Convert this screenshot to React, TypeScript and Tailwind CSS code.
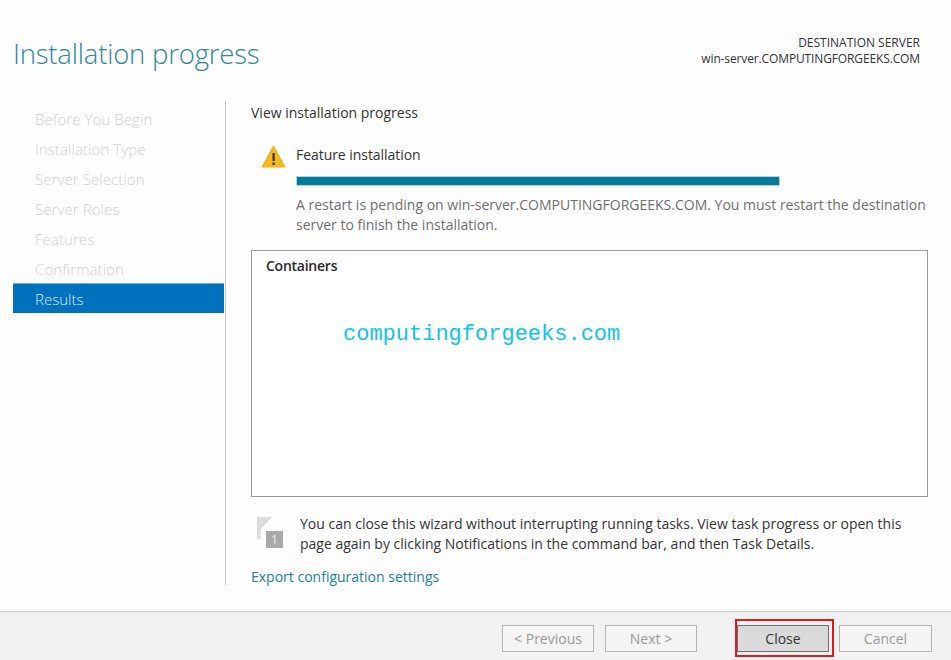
import React from "react";

const steps = ["Before You Begin", "Installation Type", "Server Selection", "Server Roles", "Features", "Confirmation"];
const font = { fontFamily: '"Open Sans", "Noto Sans", sans-serif' };

function Btn({ label, primary, wide }: { label: string; primary?: boolean; wide?: boolean }) {
  return (
    <div
      className={
        primary
          ? "w-[92px] h-[27px] flex items-center justify-center border border-[#6f6f6f] bg-[#dadada] text-[#333] text-[14px]"
          : wide
            ? "w-[93px] h-[27px] flex items-center justify-center border border-[#b5b5b5] bg-[#f4f4f4] text-[#9a9a9a] text-[14px]"
            : "w-[92px] h-[27px] flex items-center justify-center border border-[#b5b5b5] bg-[#f4f4f4] text-[#9a9a9a] text-[14px]"
      }
    >
      {label}
    </div>
  );
}

export default function App() {
  return (
    <div className="w-[951px] h-[660px] flex flex-col bg-[#fdfdfe] overflow-hidden" style={font}>
      <header className="h-[101px] shrink-0 flex justify-between pl-[13px] pr-[31px]">
        <h1 className="mt-[35px] text-[27.5px] leading-[38px] font-light text-[#2e87a0] tracking-[-0.2px]">Installation progress</h1>
        <div className="mt-[35px] text-right text-[12px] leading-[15.5px] text-[#333]">
          <div>DESTINATION SERVER</div>
          <div className="tracking-[-0.13px]">win-server.COMPUTINGFORGEEKS.COM</div>
        </div>
      </header>

      <main className="h-[510px] shrink-0 flex">
        <nav className="w-[226px] shrink-0 border-r border-[#c8c8c8] h-[484px]">
          <ul className="pl-[13px] pr-[2px] pt-[3px]">
            {steps.map((s) => (
              <li key={s} className="h-[30px] pl-[22px] flex items-center text-[15px] font-light text-[#d0d0d0] tracking-[0.08px]">{s}</li>
            ))}
            <li className="-mt-[1px] h-[30px] w-[211px] pl-[22px] pt-[2px] flex items-center text-[15px] bg-[#0071bc] border-t border-[#5fb3e6] text-[#dcecf7] font-light">Results</li>
          </ul>
        </nav>

        <section className="flex-1 pl-[25px] pr-[23px] pt-[2px] min-w-0">
          <div className="text-[14px] leading-[20px] text-[#333]">View installation progress</div>

          <div className="flex mt-[22px] pl-[10px]">
            <svg width="25" height="23" viewBox="0 0 25 23" className="shrink-0">
              <path d="M12.5 1 L24 22 H1 Z" fill="#f5b81e" stroke="#eeb011" strokeLinejoin="round" />
              <rect x="11.5" y="8" width="2.2" height="8" fill="#3a2f10" />
              <rect x="11.5" y="17.5" width="2.2" height="2.4" fill="#3a2f10" />
            </svg>
            <div className="ml-[10px] flex-1">
              <div className="text-[14px] leading-[20px] text-[#333] tracking-[-0.05px]">Feature installation</div>
              <div className="mt-[11px] w-[484px] h-[10px] bg-[#047a9b] border border-[#b6d3dc]" />
              <p className="mt-[9px] text-[14px] leading-[20px] text-[#6f6f6f] whitespace-nowrap">
                A restart is pending on win-server.COMPUTINGFORGEEKS.COM. You must restart the destination<br />
                server to finish the installation.
              </p>
            </div>
          </div>

          <div className="mt-[15px] w-[677px] h-[247px] border border-[#9a9a9a] bg-white pl-[14px] pt-[5px]">
            <div className="text-[14px] leading-[20px] font-semibold text-[#2a2a2a] tracking-[-0.25px]">Containers</div>
            <div className="mt-[47px] ml-[77px] text-[22px] leading-[24px] text-[#12c1f5]" style={{ fontFamily: '"Liberation Mono", monospace' }}>computingforgeeks.com</div>
          </div>

          <div className="flex mt-[17px] pl-[6px]">
            <svg width="26" height="36" viewBox="0 0 26 36" className="shrink-0 mt-[2px]">
              <rect x="0" y="1" width="3.5" height="22" fill="#dcdcdc" />
              <path d="M3 1 H15 L3 14 Z" fill="#dcdcdc" />
              <rect x="9" y="15" width="17" height="17" fill="#a9a9a9" />
              <text x="17.5" y="28" fontSize="12" textAnchor="middle" fill="#ececec">1</text>
            </svg>
            <p className="ml-[17px] text-[14px] leading-[20px] text-[#333] whitespace-nowrap">
              You can close this wizard without interrupting running tasks. View task progress or open this<br />
              page again by clicking Notifications in the command bar, and then Task Details.
            </p>
          </div>

          <div className="mt-[13px] text-[14px] leading-[20px] text-[#1f7f9c]">Export configuration settings</div>
        </section>
      </main>

      <footer className="flex-1 bg-[#f1f1f1] border-t border-[#cfcfcf] flex items-start pl-[502px] pt-[13px]">
        <Btn label="< Previous" />
        <div className="ml-[11px]"><Btn label="Next >" /></div>
        <div className="ml-[40px] mr-[10px] relative">
          <Btn label="Close" primary />
          <div className="absolute -left-[2px] -right-[5px] -top-[6px] -bottom-[5px] border-2 border-[#dc1a20]" />
        </div>
        <Btn label="Cancel" wide />
      </footer>
    </div>
  );
}
